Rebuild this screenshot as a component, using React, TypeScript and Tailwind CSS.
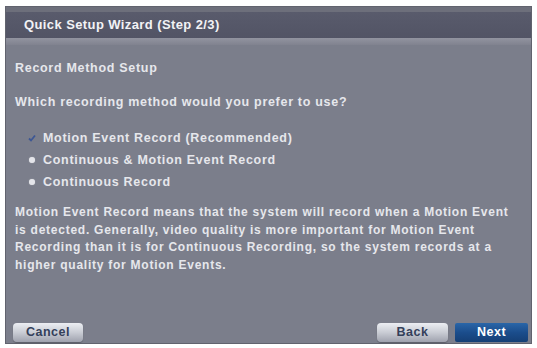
const font = { fontFamily: '"Liberation Sans", Arial, sans-serif' };

function Bullet({ selected }: { selected?: boolean }) {
  if (selected) {
    return (
      <svg width="8" height="8" viewBox="0 0 8 8">
        <path d="M1 4.5 L3 6.5 L7 1.5" stroke="#3d5794" strokeWidth="1.8" fill="none" />
      </svg>
    );
  }
  return <span className="h-[6px] w-[6px] rounded-full bg-[#e4e5ea] shadow-[0_0_1px_#c0c2ca]" />;
}

const btnGrey =
  "h-[19px] rounded-[4px] bg-gradient-to-b from-[#eceef3] via-[#c9ccd4] to-[#9fa2ae] text-[12.5px] font-bold tracking-[0.5px] text-[#34405a] shadow-[0_1px_1px_rgba(0,0,0,0.25)]";

export default function App() {
  const options = [
    { label: "Motion Event Record (Recommended)", selected: true },
    { label: "Continuous & Motion Event Record" },
    { label: "Continuous Record" },
  ];

  return (
    <div className="h-[348px] w-[537px] bg-white pl-[5px] pt-[6px]" style={font}>
      <div className="flex h-[338px] w-[527px] flex-col border border-[#61636e] bg-[#7b7e8b]">
        <div className="h-[5px] bg-[#6d6f7b]" />
        <div className="flex h-[26px] items-center bg-gradient-to-b from-[#595b6c] to-[#525465] pl-[18px] text-[13px] font-bold tracking-[0.4px] text-[#f2f2f5]">
          Quick Setup Wizard (Step 2/3)
        </div>
        <div className="h-[7px] bg-gradient-to-b from-[#9294a0] to-[#80828f]" />

        <div className="flex flex-col pl-[9px] text-[12.5px] font-bold leading-[16px] tracking-[0.7px] text-[#e6e7ec]">
          <p className="mt-[15px]">Record Method Setup</p>
          <p className="mt-[18px]">Which recording method would you prefer to use?</p>

          <div className="mt-[20px] flex flex-col gap-[6px] pl-[13px]">
            {options.map((o) => (
              <div key={o.label} className="flex items-center gap-[7px]">
                <span className="flex w-[8px] justify-center">
                  <Bullet selected={o.selected} />
                </span>
                <span>{o.label}</span>
              </div>
            ))}
          </div>

          <p className="mt-[14px] text-[12px] leading-[17.5px] tracking-[0.75px]">
            Motion Event Record means that the system will record when a Motion Event
            <br />
            is detected. Generally, video quality is more important for Motion Event
            <br />
            Recording than it is for Continuous Recording, so the system records at a
            <br />
            higher quality for Motion Events.
          </p>
        </div>

        <div className="mt-auto mb-[1px] flex items-center pl-[7px] pr-[3px]">
          <button type="button" className={btnGrey + " w-[70px]"}>
            Cancel
          </button>
          <div className="flex-1" />
          <button type="button" className={btnGrey + " w-[71px]"}>
            Back
          </button>
          <button
            type="button"
            className="ml-[7px] h-[19px] w-[73px] rounded-[2px] bg-gradient-to-b from-[#2a66a8] via-[#1b4d8c] to-[#153f75] text-[12.5px] font-bold tracking-[0.5px] text-white"
          >
            Next
          </button>
        </div>
      </div>
    </div>
  );
}
